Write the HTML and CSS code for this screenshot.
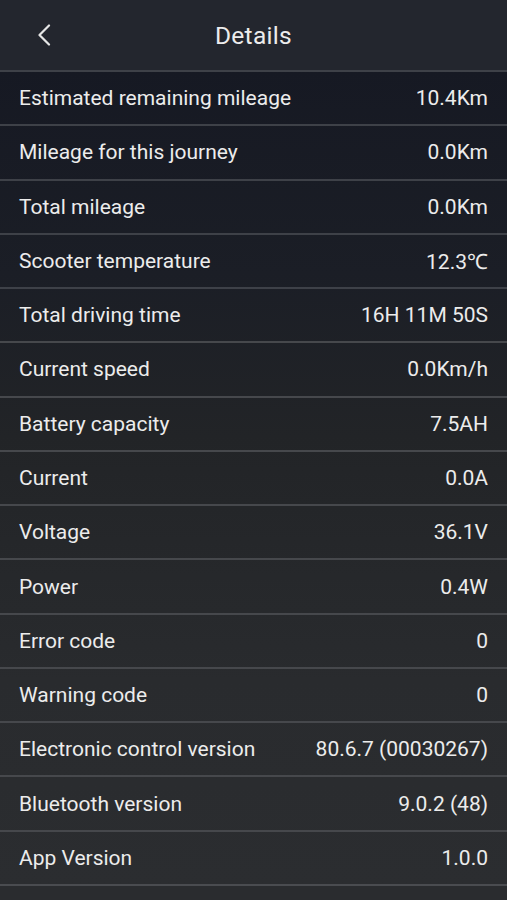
FILE: index.html
```html
<!DOCTYPE html>
<html lang="en">
    <head>
        <title>Details</title>
        <meta charset="UTF-8">
        <meta name="viewport" content="width=device-width, initial-scale=1.0">
        <link rel="stylesheet" href="styles.css">
    </head>
    <body>
        <header class="topbar">
            <a class="back" href="#" aria-label="Back">
                <svg width="14" height="22" viewBox="0 0 14 22">
                    <polyline points="12,1.5 2.5,11 12,20.5" fill="none" stroke="#e6e6e6" stroke-width="2.2" stroke-linecap="round" stroke-linejoin="round"/>
                </svg>
            </a>
            <h1>Details</h1>
        </header>

        <ul class="details">
            <li><span>Estimated remaining mileage</span><span>10.4Km</span></li>
            <li><span>Mileage for this journey</span><span>0.0Km</span></li>
            <li><span>Total mileage</span><span>0.0Km</span></li>
            <li><span>Scooter temperature</span><span>12.3℃</span></li>
            <li><span>Total driving time</span><span>16H 11M 50S</span></li>
            <li><span>Current speed</span><span>0.0Km/h</span></li>
            <li><span>Battery capacity</span><span>7.5AH</span></li>
            <li><span>Current</span><span>0.0A</span></li>
            <li><span>Voltage</span><span>36.1V</span></li>
            <li><span>Power</span><span>0.4W</span></li>
            <li><span>Error code</span><span>0</span></li>
            <li><span>Warning code</span><span>0</span></li>
            <li><span>Electronic control version</span><span>80.6.7 (00030267)</span></li>
            <li><span>Bluetooth version</span><span>9.0.2 (48)</span></li>
            <li><span>App Version</span><span>1.0.0</span></li>
        </ul>
    </body>
</html>
```

FILE: styles.css
```css
html {
    background-color: #2a2c2f;
}
body {
    margin: 0;
    padding: 0;
    font-family: Roboto, "Liberation Sans", sans-serif;
    color: #ececec;
    background-color: #2a2c2f;
}
.topbar {
    position: relative;
    height: 70px;
    background-color: #23262e;
    display: flex;
    align-items: center;
    justify-content: center;
}
.topbar h1 {
    margin: 0;
    font-size: 24.5px;
    font-weight: 400;
    letter-spacing: 0.3px;
}
.back {
    position: absolute;
    left: 37px;
    top: 24px;
    display: block;
}
.details {
    margin: 0;
    padding: 0;
    list-style: none;
    background: linear-gradient(to bottom, #161923 0%, #1b1e26 25%, #222427 45%, #292b2e 75%, #2b2d30 100%);
    border-bottom: 2px solid #4a4c50;
}
.details li {
    box-sizing: border-box;
    height: 54.27px;
    border-top: 2px solid #3e4148;
    padding: 0 19px;
    display: flex;
    align-items: center;
    justify-content: space-between;
    font-size: 21px;
}
.details li:nth-child(n+6) {
    border-top-color: #46484c;
}
```
